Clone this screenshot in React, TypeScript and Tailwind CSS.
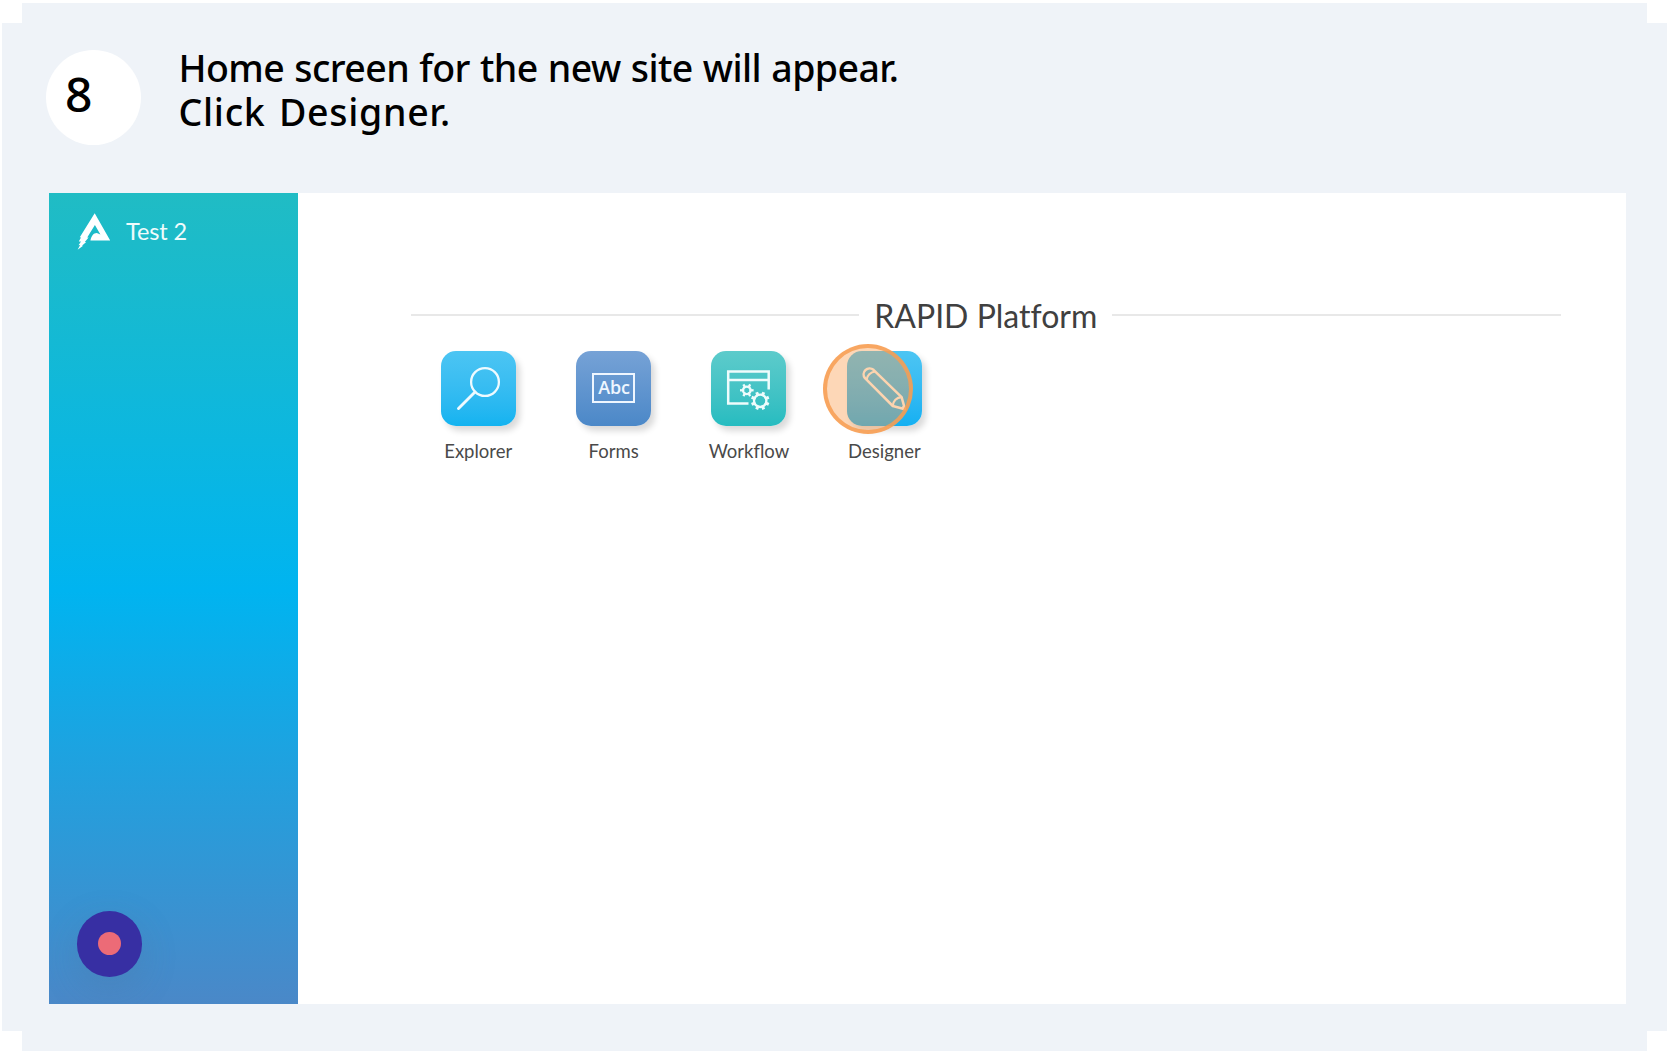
import type { ReactNode } from 'react';

function Gear({ cx, cy, r, teeth, hole, width }: { cx: number; cy: number; r: number; teeth: number; hole: number; width: number }) {
  return (
    <g transform={`translate(${cx} ${cy})`}>
      <circle r={(r + hole) / 2 - 0.5} fill="none" stroke="#eefcfc" strokeWidth={2.3} />
      {Array.from({ length: teeth }, (_, i) => (
        <rect
          key={i}
          x={-width / 2}
          y={-r - 0.5}
          width={width}
          height={r - hole}
          fill="#eefcfc"
          transform={`rotate(${(360 / teeth) * (i + 0.5)})`}
        />
      ))}
    </g>
  );
}

function Logo() {
  return (
    <svg className="h-[37px] w-[34px] shrink-0" viewBox="0 0 34 37" fill="#fff">
      <path d="M17.7 0.3 L33.2 27.6 H13.4 C14.6 22.4 16.4 20.2 19.8 20 L23.4 21.4 L17.9 12 L10.2 24.5 L11.6 24.4 L7.8 29 L9.2 29 L5.2 32.6 L5.8 33 L0.6 36.8 L3.2 32 L1.5 32.2 L4 28.6 L1.8 28.6 L4 24.6 L2.8 24.2 Z" />
    </svg>
  );
}

function ExplorerIcon() {
  return (
    <svg className="size-full" viewBox="0 0 75 75" fill="none" stroke="#eefaff" strokeWidth="2.3" strokeLinecap="round">
      <circle cx="44" cy="31" r="13.9" />
      <path d="M34 41 L17.5 57.5" strokeWidth="2.9" />
    </svg>
  );
}

function FormsIcon() {
  return (
    <div className="mb-[2px] flex h-[30px] w-[43px] items-center justify-center border-[2.5px] border-[#eef6ff] pb-px pl-px font-['Open_Sans',sans-serif] text-[18px] font-semibold leading-none tracking-[-0.2px] text-[#eef6ff]">
      Abc
    </div>
  );
}

function WorkflowIcon() {
  return (
    <svg className="size-full" viewBox="0 0 75 75" fill="none" stroke="#eefcfc" strokeWidth="2.5">
      <path d="M37.5 52.4 H17.2 V20.4 H57.7 V38.5" />
      <path d="M17.2 29 H57.7" />
      <g stroke="none">
        <Gear cx={35.8} cy={39.3} r={6.3} teeth={6} hole={2.2} width={2.3} />
        <Gear cx={49.2} cy={49.8} r={8.8} teeth={8} hole={4.6} width={3} />
      </g>
    </svg>
  );
}

function DesignerIcon() {
  return (
    <svg className="size-full" viewBox="0 0 75 75" fill="none" stroke="#fffaf2" strokeWidth="2.5" strokeLinejoin="round">
      <path d="M26.5 18.8 L54.6 46.2 L58 58.3 L45.8 55 L18 27.2 A6 6 0 0 1 26.5 18.8 Z" />
      <path d="M19.6 28.8 C19.8 24.6 23.6 20.8 28.2 20.5" strokeWidth="2.2" />
      <path d="M45.8 55 C46 50 49.6 46.4 54.6 46.2" strokeWidth="2.2" />
      <path d="M54 57.2 L57 54.4 L58 58.3 Z" fill="#fffaf2" strokeWidth="1" />
    </svg>
  );
}

function AppTile({ label, tone, children, marked = false }: { label: string; tone: string; children: ReactNode; marked?: boolean }) {
  return (
    <div className="flex w-[135.4px] flex-col items-center">
      <div className="relative size-[75px]">
        <div className={`flex size-full items-center justify-center rounded-[15px] bg-linear-to-b shadow-[4px_5px_6px_rgba(0,0,0,0.15)] ${tone}`}>
          {children}
        </div>
        {marked && (
          <div className="absolute -left-[24px] -top-[7px] size-[90px] rounded-full border-4 border-[#f79d52]/85 bg-[#fb9a4c]/40" />
        )}
      </div>
      <span className="mt-[13.5px] text-[18.5px] leading-[22px] text-[#4a4a4a]">{label}</span>
    </div>
  );
}

function Corner({ className }: { className: string }) {
  return <div className={`absolute size-5 bg-white ${className}`} />;
}

export default function App() {
  return (
    <div className="h-[1056px] w-[1680px] overflow-hidden bg-white pl-[2px] pt-[3px]">
      <div className="relative flex h-[1048px] w-[1665px] flex-col bg-[#eff3f8]">
        <Corner className="left-0 top-0" />
        <Corner className="right-0 top-0" />
        <Corner className="bottom-0 left-0" />
        <Corner className="bottom-0 right-0" />

        <header className="flex h-[190px] shrink-0 pl-[44px] pt-[47px] font-['Noto_Sans',sans-serif] font-medium text-black">
          <div className="flex size-[95px] shrink-0 items-center rounded-full bg-white pb-[8px] pl-[19px] text-[48px] leading-none">
            8
          </div>
          <div className="ml-[37.5px] -mt-[4px] whitespace-nowrap text-[37.5px] leading-[44px]">
            <p className="tracking-[-0.58px] [word-spacing:1px]">Home screen for the new site will appear.</p>
            <p className="tracking-[0.7px] [word-spacing:3px]">Click Designer.</p>
          </div>
        </header>

        <main className="ml-[47px] flex h-[811px] w-[1577px] bg-white font-['Lato',sans-serif]">
          <aside className="flex w-[249px] shrink-0 flex-col justify-between overflow-hidden bg-[linear-gradient(180deg,#20bcc4_0%,#00b4f0_49%,#4a88c8_100%)]">
            <div className="flex pl-[28px] pt-[19.5px]">
              <Logo />
              <span className="ml-[15px] mt-[4px] text-[23.5px] leading-[29px] tracking-[-0.1px] text-[#effbfc]">Test 2</span>
            </div>
            <div className="mb-[27.5px] ml-[27.5px] flex size-[65.5px] items-center justify-center rounded-full bg-[#372fa3] shadow-[0_12px_36px_rgba(80,110,140,0.22)]">
              <div className="size-[23px] rounded-full bg-[#ec6b77]" />
            </div>
          </aside>

          <section className="w-[1263px] pl-[112.5px] pt-[103px]">
            <div className="flex items-center">
              <div className="h-[2px] flex-1 bg-[#e8e8e8]" />
              <h1 className="mx-[15px] pt-px text-[32px] leading-[37px] text-[#404040] [font-variant-ligatures:none]">RAPID Platform</h1>
              <div className="h-[2px] flex-1 bg-[#e8e8e8]" />
            </div>
            <div className="mt-[17px] flex">
              <AppTile label="Explorer" tone="from-[#4cc5f3] to-[#12b3f0]">
                <ExplorerIcon />
              </AppTile>
              <AppTile label="Forms" tone="from-[#76a2d6] to-[#4b88c8]">
                <FormsIcon />
              </AppTile>
              <AppTile label="Workflow" tone="from-[#5ccbcb] to-[#25bcc0]">
                <WorkflowIcon />
              </AppTile>
              <AppTile label="Designer" tone="from-[#4cc5f3] to-[#12b0f2]" marked>
                <DesignerIcon />
              </AppTile>
            </div>
          </section>
        </main>
      </div>
    </div>
  );
}
